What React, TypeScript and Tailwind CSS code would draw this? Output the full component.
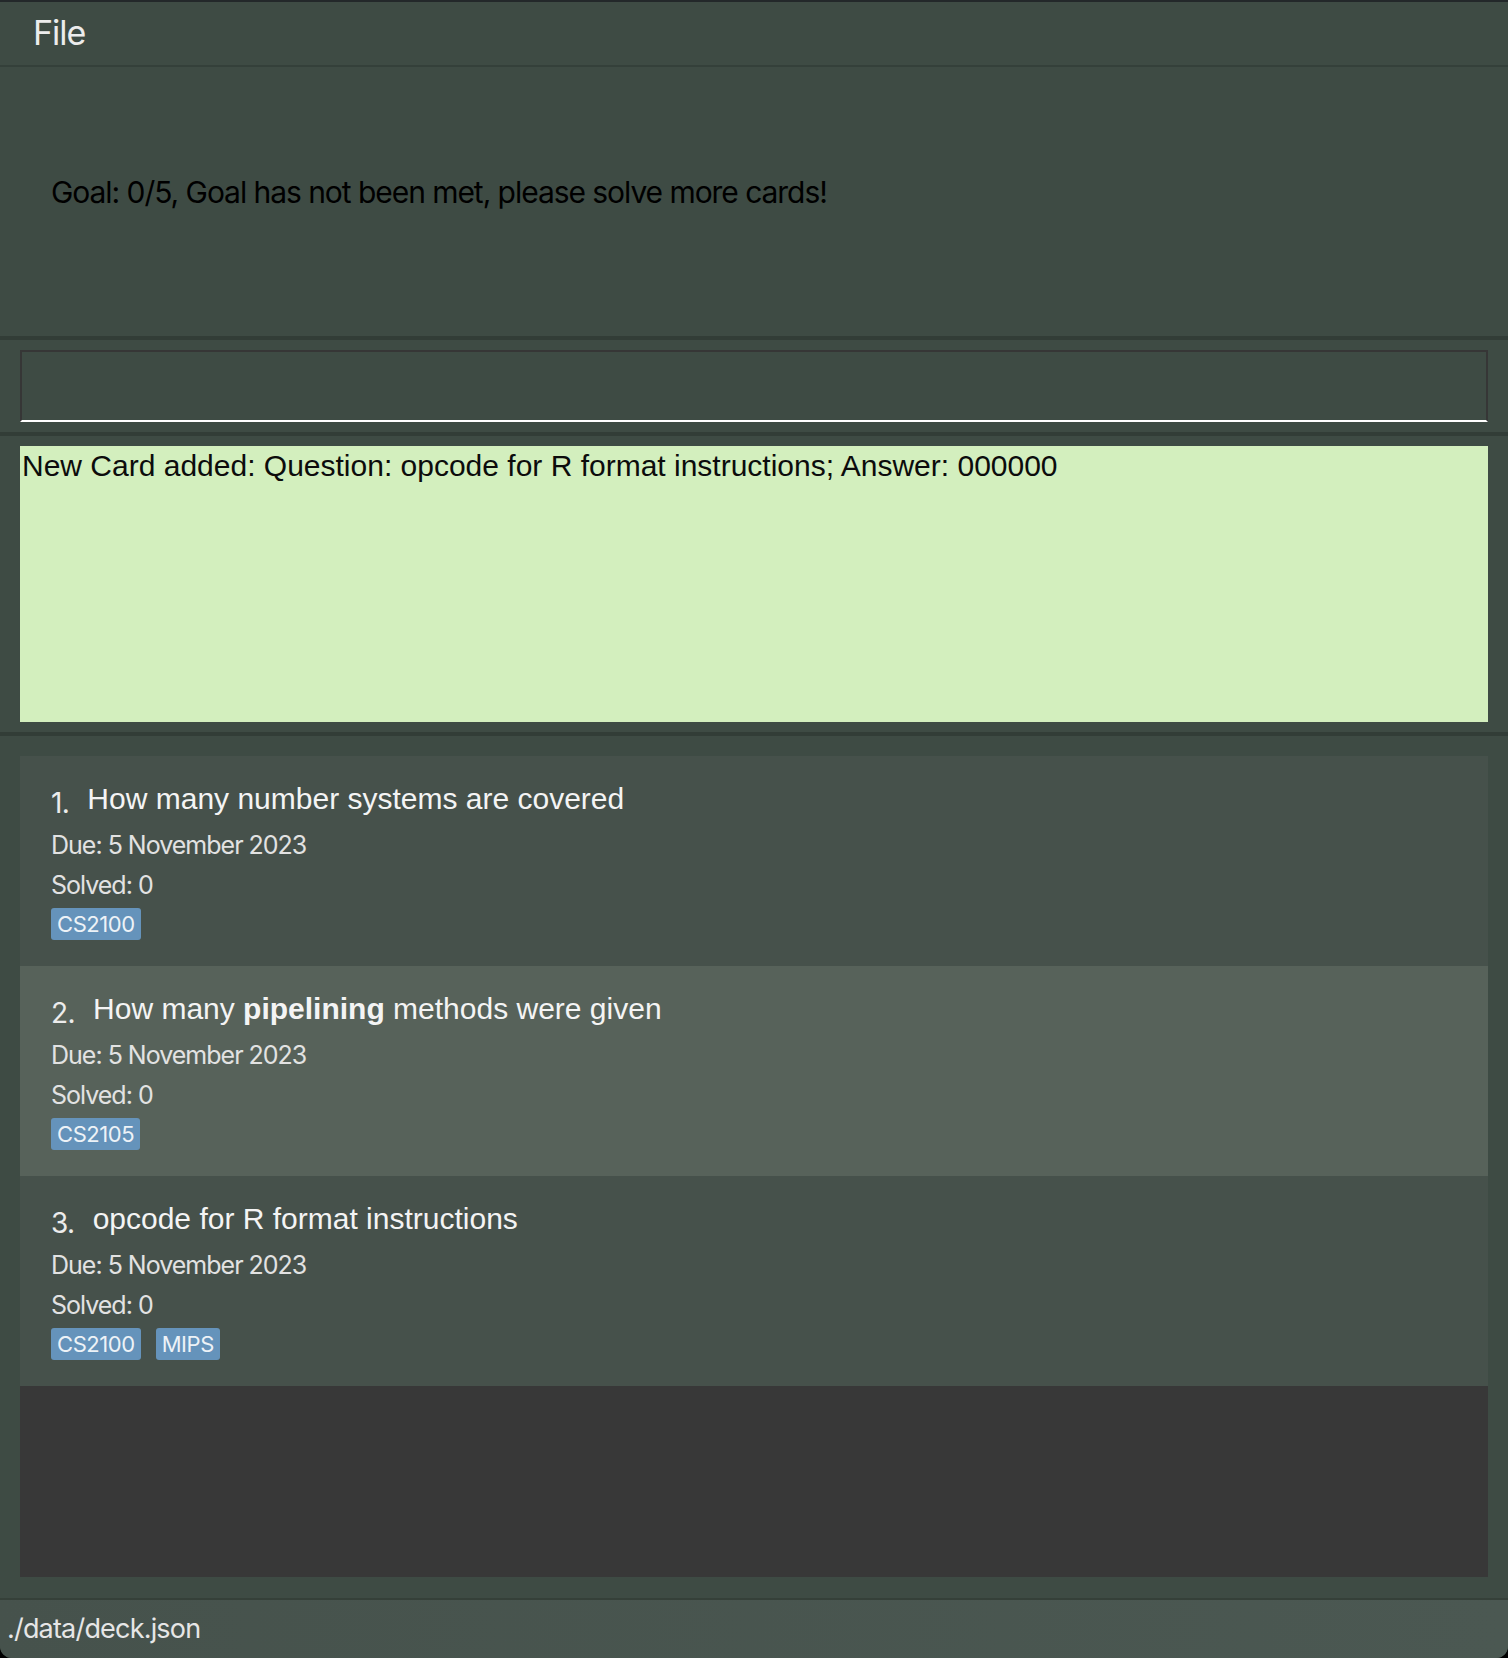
import React from 'react';

type Card = {
  question: React.ReactNode;
  due: string;
  solved: number;
  tags: string[];
};

const cards: Card[] = [
  { question: 'How many number systems are covered', due: '5 November 2023', solved: 0, tags: ['CS2100'] },
  {
    question: (
      <>
        How many <span className="font-bold">pipelining</span> methods were given
      </>
    ),
    due: '5 November 2023',
    solved: 0,
    tags: ['CS2105'],
  },
  { question: 'opcode for R format instructions', due: '5 November 2023', solved: 0, tags: ['CS2100', 'MIPS'] },
];

const sf = "font-['Inter','Noto_Sans',sans-serif]";
const helv = "font-['Liberation_Sans','Arial',sans-serif]";

function CardRow({ card, index }: { card: Card; index: number }) {
  const bg = index % 2 === 0 ? 'bg-[#46514b]' : 'bg-[#57625a]';
  return (
    <div className={`${bg} h-[210px] pl-[31px] pt-[25px] flex flex-col`}>
      <div className="flex items-baseline h-[36px] leading-[36px]">
        <span className={`${sf} text-[28px] text-[#ececec] translate-y-[4px] mr-[18px] tracking-[-0.02em]`}>{index + 1}.</span>
        <span className={`${helv} text-[30px] text-[#f4f4f4]`}>{card.question}</span>
      </div>
      <div className={`${sf} mt-[8px] text-[25px] leading-[40px] text-[#e2e2e2] tracking-[-0.04em]`}>Due: {card.due}</div>
      <div className={`${sf} text-[25px] leading-[40px] text-[#e2e2e2] tracking-[-0.04em]`}>Solved: {card.solved}</div>
      <div className="flex gap-[15px] mt-[3px]">
        {card.tags.map((t) => (
          <span
            key={t}
            className={`${sf} h-[32px] leading-[32px] px-[6px] rounded-[3px] bg-[#6593bb] text-[22px] text-[#edf2f7] tracking-[-0.02em]`}
          >
            {t}
          </span>
        ))}
      </div>
    </div>
  );
}

export default function App() {
  return (
    <div className="w-[1508px] h-[1658px] bg-black">
      <div className="w-full h-full flex flex-col bg-[#3e4b44] rounded-b-[12px] overflow-hidden border-t-2 border-[#23282a]">
        {/* menu bar */}
        <div className="h-[65px] flex items-center pl-[33px] border-b-2 border-[#34403a]">
          <span className={`${sf} text-[34px] text-[#ececec] tracking-[-0.03em] -mt-[3px]`}>File</span>
        </div>

        {/* goal panel */}
        <div className="h-[269px] flex items-center pl-[51px] pb-[18px]">
          <span className={`${sf} text-[30px] text-[#000] tracking-[-0.035em]`}>
            Goal: 0/5, Goal has not been met, please solve more cards!
          </span>
        </div>

        <div className="h-[4px] bg-[#323d37]" />

        {/* command box */}
        <div className="h-[92px] px-[20px] pt-[10px]">
          <div className="h-[72px] border-2 border-[#363636] border-b-[#ffffff]" />
        </div>

        <div className="h-[4px] bg-[#323d37]" />

        {/* result display */}
        <div className="h-[296px] px-[20px] pt-[10px]">
          <div className="h-[276px] bg-[#d3efbe] pl-[2px] pt-[2px]">
            <p className={`${helv} text-[30px] leading-[36px] text-[#0c0c0c]`}>
              New Card added: Question: opcode for R format instructions; Answer: 000000
            </p>
          </div>
        </div>

        <div className="h-[4px] bg-[#323d37]" />

        {/* card list */}
        <div className="flex-1 px-[20px] pt-[20px] pb-[21px] flex flex-col">
          <div className="flex-1 bg-[#383838] flex flex-col">
            {cards.map((c, i) => (
              <CardRow key={i} card={c} index={i} />
            ))}
          </div>
        </div>

        {/* status bar */}
        <div className="h-[60px] border-t-2 border-[#354039] bg-gradient-to-r from-[#46524c] to-[#4b5852] flex items-center pl-[7px]">
          <span className={`${sf} text-[27px] text-[#e6e6e6] tracking-[-0.03em]`}>./data/deck.json</span>
        </div>
      </div>
    </div>
  );
}
